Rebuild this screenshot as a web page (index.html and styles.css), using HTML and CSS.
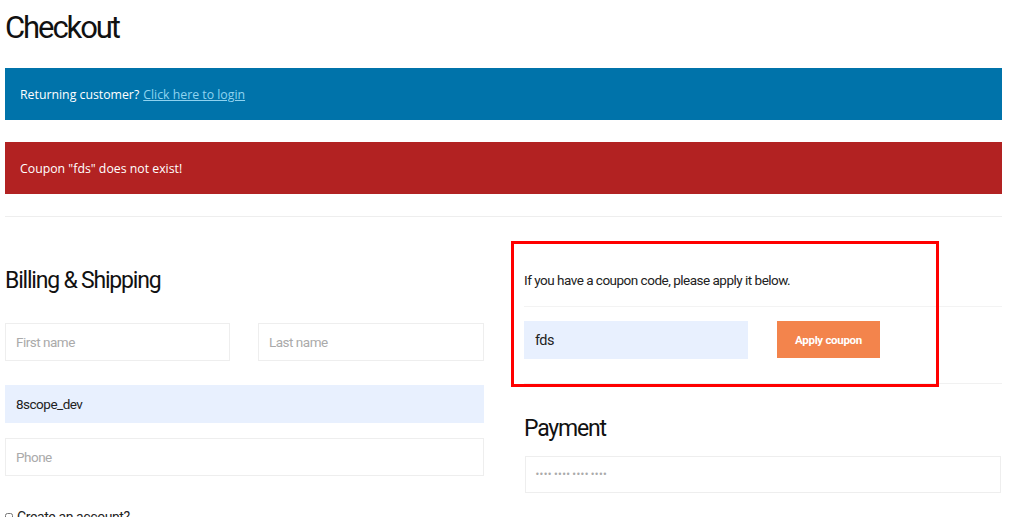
FILE: index.html
```html
<!doctype html>
<html lang="en">
  <head>
    <meta charset="UTF-8" />
    <title>Checkout</title>
    <link rel="stylesheet" href="styles.css">
  </head>
  <body>
    <div class="page">
      <h1 class="page-title">Checkout</h1>

      <div class="notice notice-info">
        Returning customer? <a href="#">Click here to login</a>
      </div>
      <div class="notice notice-error">Coupon "fds" does not exist!</div>

      <hr class="divider" />

      <div class="columns">
        <div class="col">
          <h2 class="section-title">Billing &amp; Shipping</h2>
          <div class="row two">
            <input class="field" type="text" placeholder="First name" />
            <input class="field" type="text" placeholder="Last name" />
          </div>
          <div class="row user">
            <input class="field filled" type="text" value="8scope_dev" />
          </div>
          <div class="row">
            <input class="field" type="text" placeholder="Phone" />
          </div>
          <label class="check">
            <input type="checkbox" /> Create an account?
          </label>
        </div>

        <div class="col col-right">
          <div class="coupon">
            <p class="coupon-text">If you have a coupon code, please apply it below.</p>
            <div class="coupon-form">
              <input class="field filled" type="text" value="fds" />
              <button class="btn-apply">Apply coupon</button>
            </div>
            <!-- highlight box drawn over the coupon form -->
            <div class="highlight"></div>
          </div>

          <h2 class="section-title payment-title">Payment</h2>
          <input class="field card" type="text" placeholder="•••• •••• •••• ••••" />
        </div>
      </div>
    </div>
  </body>
</html>
```

FILE: styles.css
```css
* {
  margin: 0;
  padding: 0;
  box-sizing: border-box;
}

body {
  font-family: Roboto, "Liberation Sans", sans-serif;
  color: #222;
  background: white;
  overflow: hidden;
}

.page {
  width: 997px;
  margin-left: 5px;
}

.page-title {
  font-size: 31px;
  font-weight: 400;
  letter-spacing: -2.1px;
  line-height: 1;
  padding-top: 12px;
  height: 68px;
  color: #111;
}

.notice {
  font-family: "Open Sans", sans-serif;
  font-size: 12.3px;
  color: white;
  height: 52px;
  padding: 0 15px;
  display: flex;
  align-items: center;
  gap: 4px;
}

.notice-info {
  background: #0073aa;
  margin-bottom: 22px;
}

.notice-info a {
  color: #8fd3f0;
  text-decoration: underline;
}

.notice-error {
  background: #b22222;
}

.divider {
  border: none;
  border-top: 1px solid #eeeeee;
  margin-top: 22px;
}

.columns {
  display: grid;
  grid-template-columns: 479px 478px;
  gap: 40px;
}

.section-title {
  font-size: 23px;
  font-weight: 400;
  letter-spacing: -1.2px;
  color: #111;
  line-height: 1;
}

.col > .section-title {
  margin-top: 52px;
  margin-bottom: 31px;
}

.row {
  margin-bottom: 24px;
}

.row.user {
  margin-bottom: 15px;
}

.row.two {
  display: grid;
  grid-template-columns: 225px 226px;
  justify-content: space-between;
}

.field {
  display: block;
  width: 100%;
  height: 38px;
  border: 1px solid #eeeeee;
  background: white;
  padding: 0 10px;
  font-family: Roboto, "Liberation Sans", sans-serif;
  font-size: 13.5px;
  letter-spacing: -0.5px;
  color: #222;
  outline: none;
}

.field::placeholder {
  color: #aaa;
}

.field.filled {
  background: #e8f0fe;
  border-color: #e8f0fe;
}

.check {
  display: flex;
  align-items: center;
  gap: 4px;
  margin-top: 33px;
  font-size: 14px;
  letter-spacing: -0.4px;
}

.check input {
  width: 8px;
  height: 8px;
}

.col-right {
  position: relative;
}

.coupon {
  padding-top: 55px;
  border-bottom: 1px solid #f1f1f1;
  padding-bottom: 24px;
}

.coupon-text {
  font-size: 13.5px;
  letter-spacing: -0.5px;
  line-height: 16px;
  padding-bottom: 18px;
  border-bottom: 1px solid #f3f3f3;
  color: #222;
}

.coupon-form {
  display: flex;
  gap: 29px;
  margin-top: 14px;
}

.coupon-form .field {
  width: 224px;
  font-size: 14.5px;
}

.btn-apply {
  width: 103px;
  height: 37px;
  border: none;
  background: #f3844c;
  color: white;
  font-family: Roboto, "Liberation Sans", sans-serif;
  font-weight: 700;
  font-size: 11.5px;
  letter-spacing: -0.3px;
}

.highlight {
  position: absolute;
  left: -13px;
  top: 24px;
  width: 428px;
  height: 146px;
  border: 3px solid #ff0000;
}

.col > .payment-title {
  margin-top: 33px;
  margin-bottom: 16px;
}

.field.card {
  margin-left: 1px;
  width: 476px;
  height: 37px;
  font-family: "DejaVu Sans", sans-serif;
  font-size: 8px;
  letter-spacing: -0.6px;
  padding-left: 9px;
}
```
